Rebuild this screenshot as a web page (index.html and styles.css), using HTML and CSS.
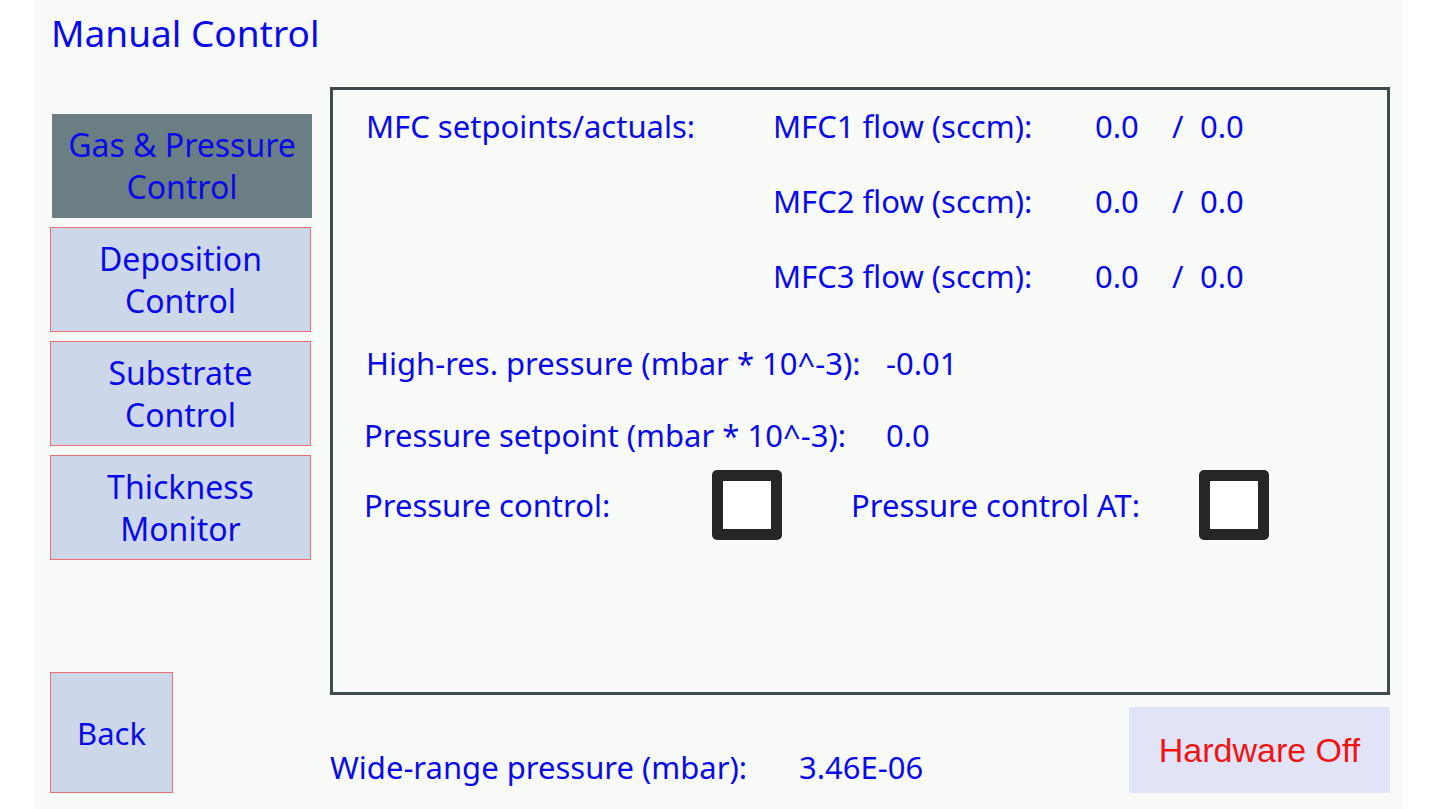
FILE: index.html
```html
<!DOCTYPE html>
<html lang="en">
<head>
    <meta charset="UTF-8">
    <title>Manual Control</title>
    <link rel="stylesheet" href="styles.css">
</head>
<body>
    <div class="screen">
        <div class="title-bar">
            <h1 class="title">Manual Control</h1>
        </div>

        <div class="content">
            <div class="sidebar">
                <div class="nav-btn active">Gas &amp; Pressure<br>Control</div>
                <div class="nav-btn">Deposition<br>Control</div>
                <div class="nav-btn">Substrate<br>Control</div>
                <div class="nav-btn">Thickness<br>Monitor</div>
                <div class="back-btn">Back</div>
            </div>

            <div class="main">
                <div class="panel">
                    <div class="mfc-grid">
                        <span>MFC setpoints/actuals:</span>
                        <span>MFC1 flow (sccm):</span>
                        <span>0.0</span>
                        <span>/</span>
                        <span>0.0</span>

                        <span></span>
                        <span>MFC2 flow (sccm):</span>
                        <span>0.0</span>
                        <span>/</span>
                        <span>0.0</span>

                        <span></span>
                        <span>MFC3 flow (sccm):</span>
                        <span>0.0</span>
                        <span>/</span>
                        <span>0.0</span>
                    </div>

                    <div class="pressure-row first">
                        <span>High-res. pressure (mbar * 10^-3):</span>
                        <span>-0.01</span>
                    </div>
                    <div class="pressure-row">
                        <span class="shift">Pressure setpoint (mbar * 10^-3):</span>
                        <span>0.0</span>
                    </div>

                    <div class="control-row">
                        <span class="control-label">Pressure control:</span>
                        <div class="checkbox"></div>
                        <span class="control-label at">Pressure control AT:</span>
                        <div class="checkbox"></div>
                    </div>
                </div>

                <div class="footer">
                    <div class="wide-range">
                        <span class="wide-label">Wide-range pressure (mbar):</span>
                        <span>3.46E-06</span>
                    </div>
                    <div class="hw-btn">Hardware Off</div>
                </div>
            </div>
        </div>
    </div>
</body>
</html>
```

FILE: styles.css
```css
* {
    margin: 0;
    padding: 0;
    box-sizing: border-box;
}

body {
    background-color: #ffffff;
    font-family: "Noto Sans", "Open Sans", sans-serif;
    color: #0a0ae8;
}

.screen {
    width: 1368px;
    height: 809px;
    margin-left: 35px;
    background-color: #f7faf6;
    display: flex;
    flex-direction: column;
}

.title-bar {
    height: 87px;
    padding: 7px 0 0 16px;
}

.title {
    font-size: 37px;
    font-weight: normal;
    line-height: 52px;
}

.content {
    flex: 1;
    display: flex;
    padding: 0 13px 16px 15px;
    gap: 18px;
}

/* Left navigation */
.sidebar {
    width: 262px;
    display: flex;
    flex-direction: column;
    gap: 9px;
    padding-top: 27px;
}

.nav-btn {
    height: 105px;
    display: flex;
    align-items: center;
    justify-content: center;
    text-align: center;
    font-size: 32px;
    line-height: 42px;
    background-color: #cdd7ea;
    border: 1px solid #ec6f6f;
    width: 261px;
}

.nav-btn.active {
    background-color: #6a7e84;
    border-color: #6a7e84;
    width: 260px;
    margin-left: 2px;
    height: 104px;
}

.back-btn {
    margin-top: auto;
    width: 123px;
    height: 121px;
    display: flex;
    align-items: center;
    justify-content: center;
    font-size: 31px;
    background-color: #cdd7ea;
    border: 1px solid #ec6f6f;
}

/* Main panel */
.main {
    width: 1060px;
    display: flex;
    flex-direction: column;
}

.panel {
    height: 608px;
    border: 3px solid #3d4b4d;
    background-color: #f9fbf8;
    padding: 16px 33px;
    font-size: 31px;
    line-height: 40px;
}

.mfc-grid {
    display: grid;
    grid-template-columns: 407px 322px 77px 28px auto;
    row-gap: 35px;
}

.pressure-row {
    display: grid;
    grid-template-columns: 520px auto;
    margin-top: 32px;
}

.pressure-row.first {
    margin-top: 47px;
}

.shift {
    margin-left: -2px;
}

.control-row {
    display: flex;
    align-items: center;
    margin-top: 15px;
    margin-left: -2px;
}

.control-label {
    width: 348px;
}

.control-label.at {
    margin-left: 69px;
}

.checkbox {
    width: 70px;
    height: 70px;
    border: 11px solid #262626;
    border-radius: 5px;
    background-color: #ffffff;
}

/* Bottom bar */
.footer {
    flex: 1;
    display: flex;
    justify-content: space-between;
    align-items: flex-end;
}

.wide-range {
    display: flex;
    font-size: 31px;
    line-height: 40px;
    margin-bottom: 6px;
}

.wide-label {
    width: 469px;
}

.hw-btn {
    width: 261px;
    height: 86px;
    display: flex;
    align-items: center;
    justify-content: center;
    background-color: #e0e4f6;
    color: #f01414;
    font-family: "Liberation Sans", Arial, sans-serif;
    font-size: 34px;
}
```
